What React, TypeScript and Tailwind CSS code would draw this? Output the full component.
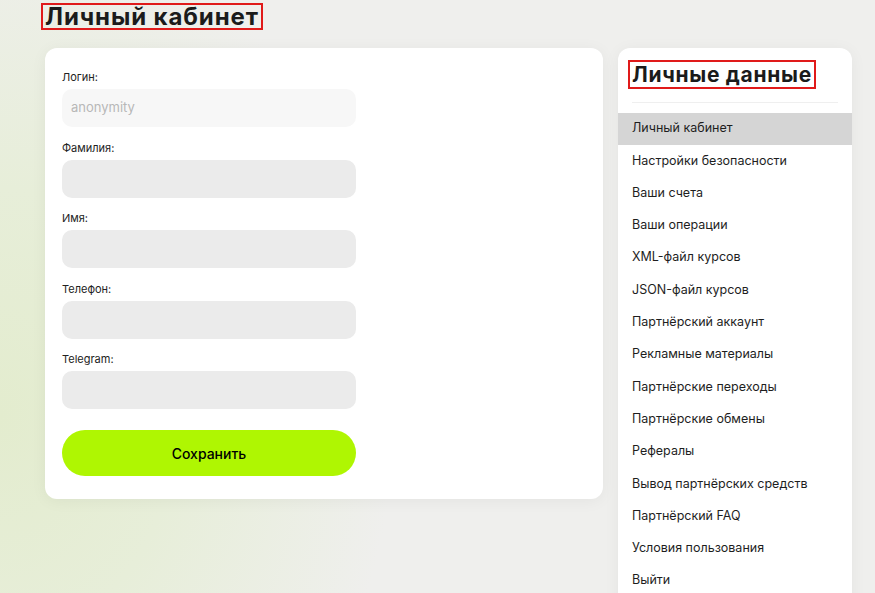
import React from "react";

const items = [
  "Личный кабинет",
  "Настройки безопасности",
  "Ваши счета",
  "Ваши операции",
  "XML-файл курсов",
  "JSON-файл курсов",
  "Партнёрский аккаунт",
  "Рекламные материалы",
  "Партнёрские переходы",
  "Партнёрские обмены",
  "Рефералы",
  "Вывод партнёрских средств",
  "Партнёрский FAQ",
  "Условия пользования",
  "Выйти",
];

const fields = [
  { label: "Логин:", value: "anonymity", light: true },
  { label: "Фамилия:" },
  { label: "Имя:" },
  { label: "Телефон:" },
  { label: "Telegram:" },
];

export default function App() {
  return (
    <div className="w-[875px] h-[593px] overflow-hidden bg-[#efefed] bg-[radial-gradient(ellipse_45%_85%_at_0%_70%,#e3ecce_0%,#e7eed9_45%,#efefed_100%)] text-[#111] font-['Inter','Noto_Sans',sans-serif]">
      <div className="pl-[41px] pt-[3px]">
        <h1 className="inline-block border-2 border-[#e01a1a] px-[2px] text-[24px] leading-[23px] font-bold text-[#1b1b1b] tracking-[0.9px]">
          Личный кабинет
        </h1>
      </div>
      <div className="flex gap-[15px] pl-[45px] mt-[17px] items-start">
        <div className="w-[558px] bg-white rounded-[12px] shadow-[0_2px_16px_rgba(0,0,0,0.05)] pt-[22px] pb-[23px] px-[17px]">
          <div className="flex flex-col gap-[13.5px]">
            {fields.map((f) => (
              <div key={f.label} className="flex flex-col">
                <label className="text-[11px] leading-[14px] text-[#222] mb-[5px]">{f.label}</label>
                <div
                  className={`w-[294px] h-[38px] rounded-[10px] flex items-center px-[9px] text-[13px] ${
                    f.light ? "bg-[#f7f7f7] text-[#b8b8b8]" : "bg-[#ebebeb]"
                  }`}
                >
                  {f.value}
                </div>
              </div>
            ))}
          </div>
          <button className="mt-[21px] w-[294px] h-[46px] rounded-full bg-[#aff602] text-[14px] font-medium text-black">
            Сохранить
          </button>
        </div>
        <div className="w-[234px] h-[560px] bg-white rounded-t-[12px] shadow-[0_2px_16px_rgba(0,0,0,0.05)] pt-[12px]">
          <div className="px-[10px]">
            <h2 className="inline-block border-2 border-[#e01a1a] px-[2px] text-[21px] leading-[25px] font-bold text-[#1b1b1b] tracking-[0.7px]">
              Личные данные
            </h2>
          </div>
          <div className="mx-[14px] mt-[13px] h-px bg-[#efefef]" />
          <ul className="mt-[9.5px]">
            {items.map((t, i) => (
              <li
                key={t}
                className={`h-[32.3px] flex items-center px-[14px] text-[12.5px] text-[#1e1e1e] ${
                  i === 0 ? "bg-[#d5d5d5]" : ""
                }`}
              >
                {t}
              </li>
            ))}
          </ul>
        </div>
      </div>
    </div>
  );
}
